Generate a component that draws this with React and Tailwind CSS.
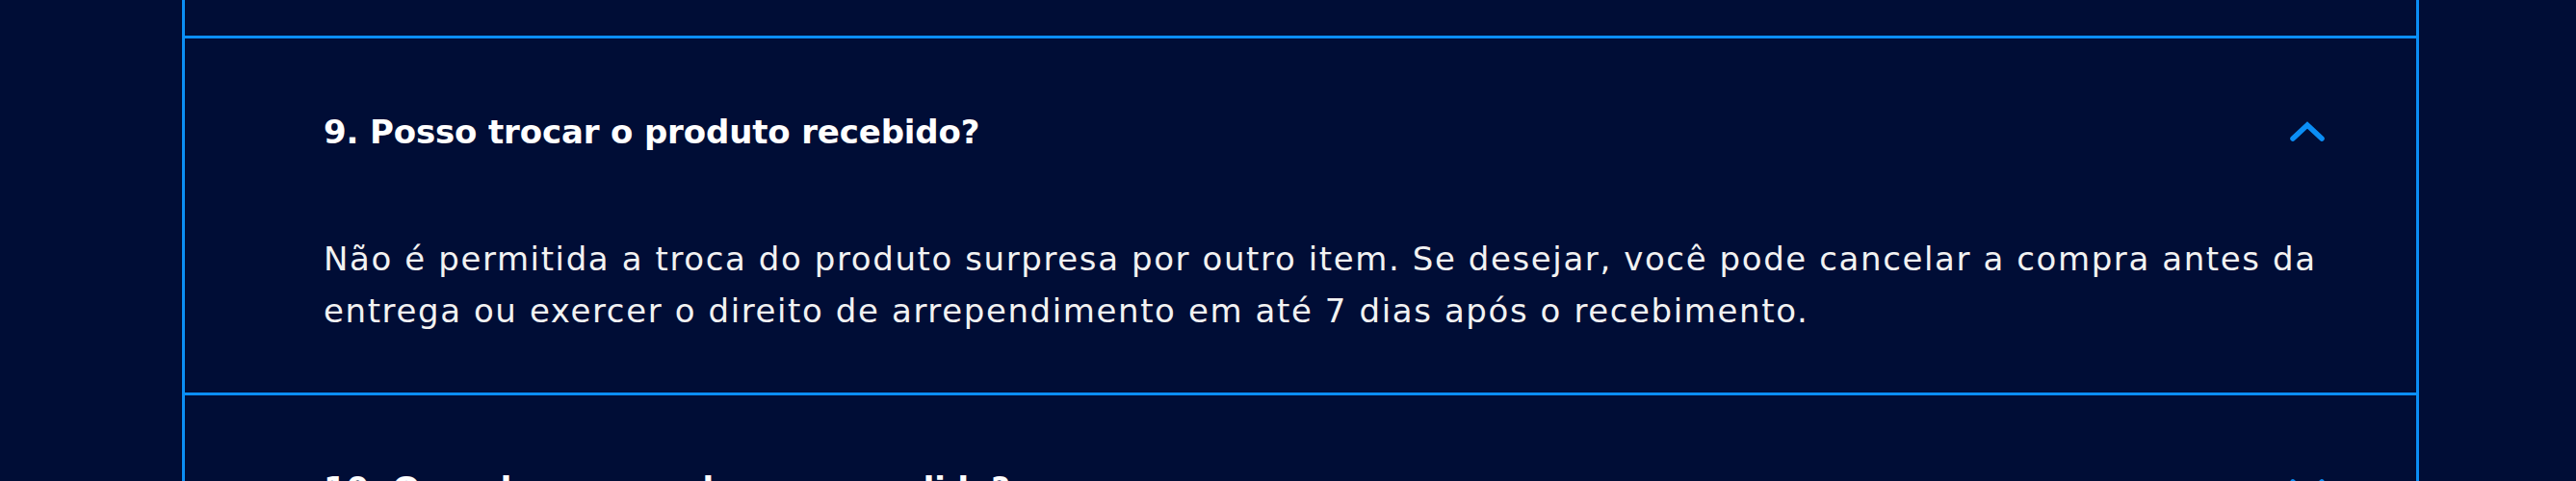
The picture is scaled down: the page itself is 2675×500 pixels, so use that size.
import React, { useState } from 'react';

const faqs = [
  {
    id: 8,
    question: '8. Como funciona o envio?',
    answer: '',
  },
  {
    id: 9,
    question: '9. Posso trocar o produto recebido?',
    answer:
      'Não é permitida a troca do produto surpresa por outro item. Se desejar, você pode cancelar a compra antes da entrega ou exercer o direito de arrependimento em até 7 dias após o recebimento.',
  },
  {
    id: 10,
    question: '10. Quando vou receber meu pedido?',
    answer: '',
  },
];

function Chevron({ open }) {
  return (
    <svg
      width="38"
      height="22"
      viewBox="0 0 38 22"
      fill="none"
      className={open ? '' : 'rotate-180'}
    >
      <path
        d="M4 18 L19 4 L34 18"
        stroke="#0b8ef5"
        strokeWidth="5.5"
        strokeLinecap="round"
        strokeLinejoin="miter"
      />
    </svg>
  );
}

export default function App() {
  const [openId, setOpenId] = useState(9);

  return (
    <div className="min-h-[500px] h-[500px] overflow-hidden bg-[#000d36] font-['DejaVu_Sans',sans-serif] text-white">
      <div className="mx-[189px] w-[2323px] border-x-[3px] border-[#0b8ef5]">
        {/* fim do item anterior */}
        <div className="h-[37px]" />

        {faqs.slice(1).map((item) => {
          const open = openId === item.id;
          return (
            <div key={item.id} className="border-t-[3px] border-[#0b8ef5]">
              <button
                type="button"
                onClick={() => setOpenId(open ? null : item.id)}
                className="flex w-full items-center justify-between pl-[144px] pr-[94px] pt-[70px] pb-[72px] text-left"
              >
                <span className="text-[34px] leading-[54px] font-bold tracking-[-0.15px]">
                  {item.question}
                </span>
                <Chevron open={open} />
              </button>
              {open && (
                <div className="pl-[144px] pr-[60px] pt-[6px] pb-[58px]">
                  <p className="text-[34px] leading-[54px] tracking-[1.6px] text-[#f2f2f2]">
                    {item.answer}
                  </p>
                </div>
              )}
            </div>
          );
        })}
      </div>
    </div>
  );
}
